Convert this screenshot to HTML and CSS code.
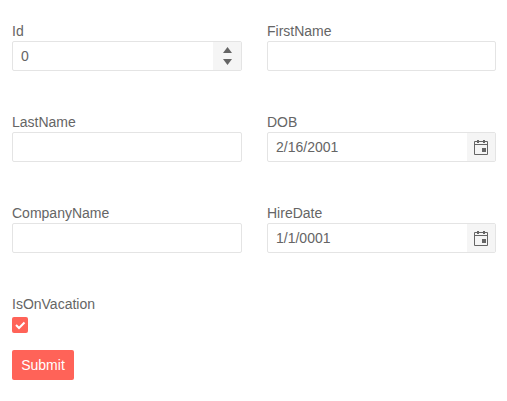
FILE: index.html
```html
<!DOCTYPE html>
<html lang="en">
<head>
<meta charset="utf-8">
<title>Employee form</title>
<link rel="stylesheet" href="styles.css">
</head>
<body>
<form class="form">
  <div class="grid">
    <div class="field">
      <label class="label">Id</label>
      <div class="box"><span class="value">0</span>
        <span class="spin">
          <svg class="arrow" width="9" height="6" viewBox="0 0 9 6"><path d="M4.5 0L9 6H0Z"/></svg>
          <svg class="arrow" width="9" height="6" viewBox="0 0 9 6"><path d="M0 0H9L4.5 6Z"/></svg>
        </span>
      </div>
    </div>
    <div class="field">
      <label class="label">FirstName</label>
      <div class="box"></div>
    </div>
    <div class="field">
      <label class="label">LastName</label>
      <div class="box"></div>
    </div>
    <div class="field">
      <label class="label">DOB</label>
      <div class="box"><span class="value">2/16/2001</span>
        <span class="cal">
          <svg class="cal-icon" width="16" height="16" viewBox="0 0 16 16"><path d="M1.5 2.5h13v13h-13zM1.5 5.5h13" fill="none" stroke="#656565"/><path d="M4 1h2v3H4zM10 1h2v3h-2zM9 9h4v4H9z" fill="#656565"/></svg>
        </span>
      </div>
    </div>
    <div class="field">
      <label class="label">CompanyName</label>
      <div class="box"></div>
    </div>
    <div class="field">
      <label class="label">HireDate</label>
      <div class="box"><span class="value">1/1/0001</span>
        <span class="cal">
          <svg class="cal-icon" width="16" height="16" viewBox="0 0 16 16"><path d="M1.5 2.5h13v13h-13zM1.5 5.5h13" fill="none" stroke="#656565"/><path d="M4 1h2v3H4zM10 1h2v3h-2zM9 9h4v4H9z" fill="#656565"/></svg>
        </span>
      </div>
    </div>
  </div>
  <div class="check-field">
    <label class="label">IsOnVacation</label>
    <span class="check">
      <svg width="16" height="16" viewBox="0 0 16 16"><path d="M4 8L7 11L12.5 5.5" fill="none" stroke="#fff" stroke-width="2"/></svg>
    </span>
  </div>
  <button class="submit" type="button">Submit</button>
</form>
</body>
</html>
```
FILE: styles.css
```css
* { box-sizing: border-box; }
html, body { margin: 0; padding: 0; background: #fff; }
body {
  font-family: "Liberation Sans", Arial, sans-serif;
  font-size: 14px;
  line-height: 20px;
  color: #656565;
}
.form { padding: 21px 11px 0 12px; }
.grid {
  display: grid;
  grid-template-columns: 230px 229px;
  column-gap: 25px;
  row-gap: 41px;
}
.field { display: flex; flex-direction: column; height: 50px; }
.label { display: block; height: 20px; }
.box {
  display: flex;
  align-items: stretch;
  height: 30px;
  border: 1px solid #e4e4e4;
  border-radius: 2px;
  background: #fff;
}
.value { flex: 1; padding: 4px 8px; line-height: 20px; }
.spin, .cal {
  width: 28px;
  background: #f5f5f5;
  display: flex;
  align-items: center;
  justify-content: center;
}
.spin { flex-direction: column; gap: 6px; }
.arrow { display: block; fill: #656565; }
.cal-icon { display: block; }
.check-field { margin-top: 41px; }
.check {
  display: block;
  width: 16px;
  height: 16px;
  margin-top: 3px;
  border-radius: 2px;
  background: #ff6358;
}
.check svg { display: block; }
.submit {
  display: block;
  margin-top: 17px;
  width: 62px;
  height: 30px;
  padding: 0;
  border: 0;
  border-radius: 2px;
  background: #ff6358;
  color: #fff;
  font: inherit;
}
```
